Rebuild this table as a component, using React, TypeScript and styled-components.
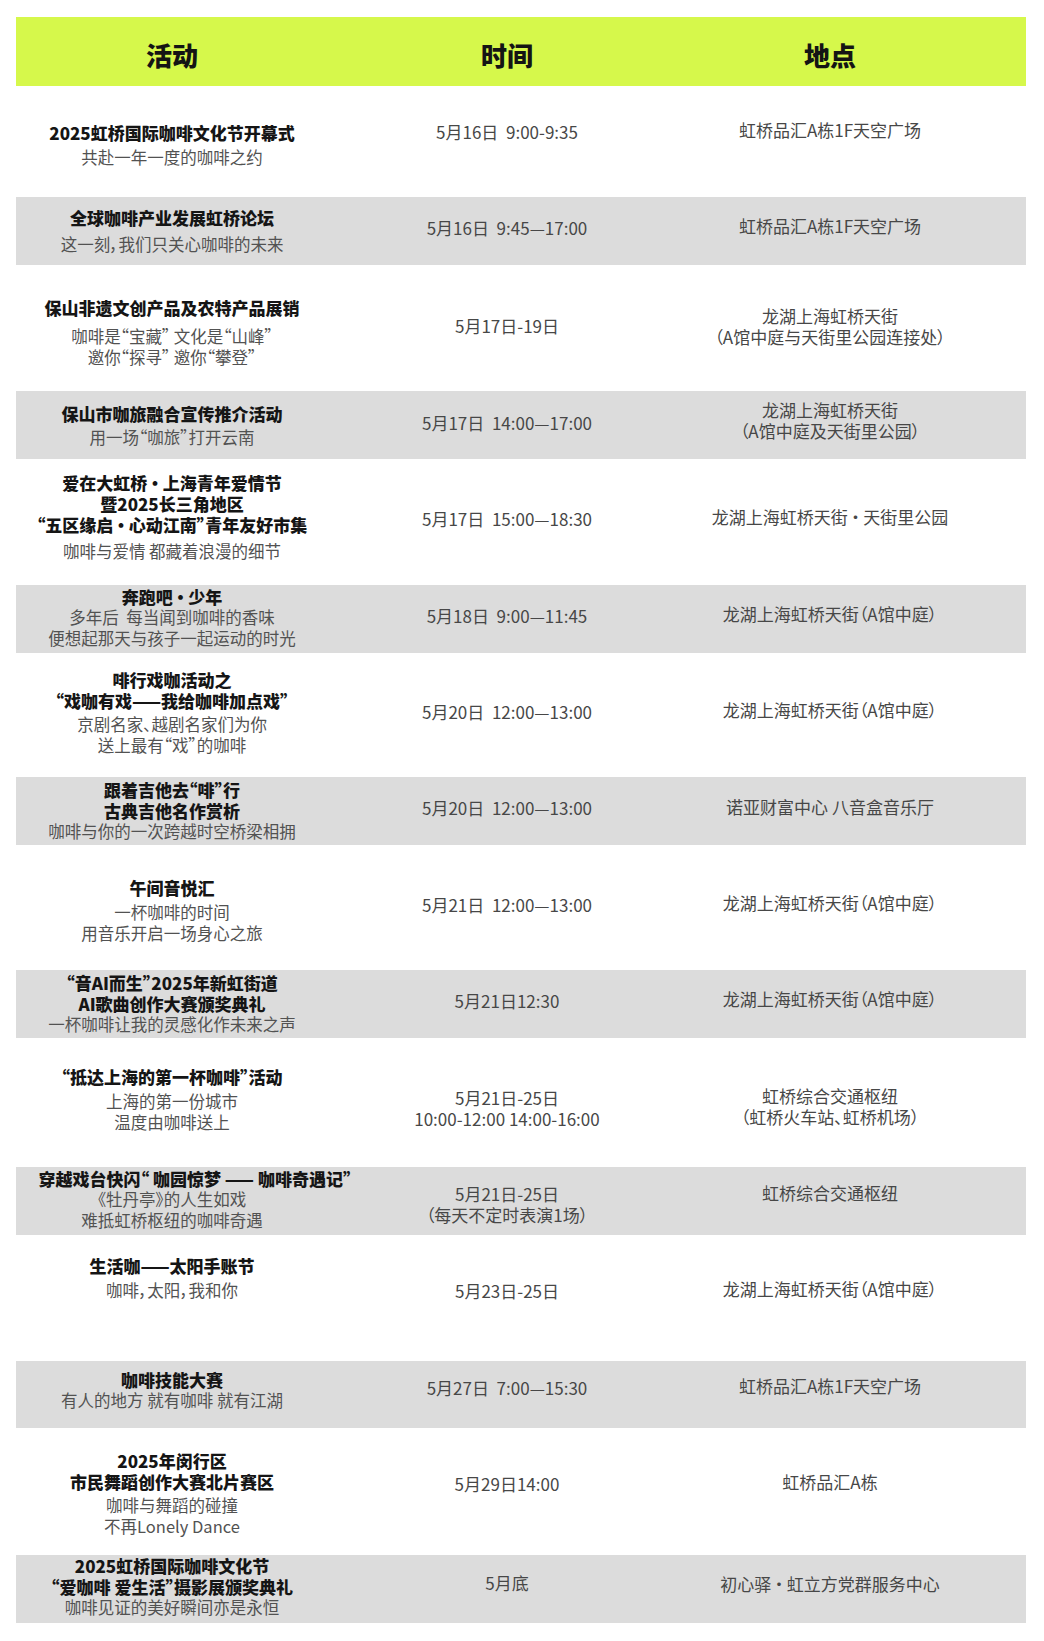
import React from "react";
import styled, { createGlobalStyle } from "styled-components";

const GlobalStyle = createGlobalStyle`
  html, body {
    margin: 0;
    padding: 0;
    background: #ffffff;
  }
  body {
    font-family: "Noto Sans CJK SC", "Noto Sans", sans-serif;
    font-feature-settings: "palt";
  }
`;

// activity / time / place / empty gutter on the right
const COLUMNS = "312px 358px 288px 1fr";

// middle dot with a little air on both sides, as in the poster
const DOT = "\u2009·\u2009";

const Page = styled.div`
  width: 1044px;
  box-sizing: border-box;
  padding: 17px 18px 18px 16px;
`;

const HeaderRow = styled.div`
  display: grid;
  grid-template-columns: ${COLUMNS};
  align-items: center;
  height: 69px;
  background: #d6f84b;
`;

const HeaderCell = styled.div`
  padding-top: 5px;
  text-align: center;
  font-size: 26px;
  font-weight: 900;
  color: #141414;
`;

const Row = styled.div<{ $height: number; $shaded: boolean }>`
  display: grid;
  grid-template-columns: ${COLUMNS};
  align-items: center;
  height: ${(p) => p.$height}px;
  background: ${(p) => (p.$shaded ? "#dcdcdc" : "#ffffff")};
`;

// moves a centred cell up (negative) or down (positive) by the given px
const shiftPad = (s: number) =>
  s >= 0 ? `padding-top: ${s * 2}px;` : `padding-bottom: ${-s * 2}px;`;

const ActivityCell = styled.div<{ $shift: number }>`
  display: flex;
  flex-direction: column;
  align-items: center;
  text-align: center;
  white-space: pre;
  ${(p) => shiftPad(p.$shift)}
`;

const Title = styled.div<{ $nudge: number }>`
  margin-left: ${(p) => p.$nudge}px;
  font-size: 17px;
  line-height: 21px;
  font-weight: 900;
  color: #151515;
`;

const Subtitles = styled.div<{ $gap: number }>`
  margin-top: ${(p) => p.$gap}px;
  font-size: 16.5px;
  line-height: 21px;
  color: #525252;
`;

const InfoCell = styled.div<{ $shift: number }>`
  text-align: center;
  font-size: 17px;
  line-height: 21px;
  color: #474747;
  white-space: pre;
  ${(p) => shiftPad(p.$shift)}
`;

type Event = {
  title: string[];
  sub: string[];
  time: string[];
  place: string[];
  height: number;
  gap: number;
  a: number;
  t: number;
  p: number;
  nudge?: number;
};

const events: Event[] = [
  {
    title: ["2025虹桥国际咖啡文化节开幕式"],
    sub: ["共赴一年一度的咖啡之约"],
    time: ["5月16日  9:00-9:35"],
    place: ["虹桥品汇A栋1F天空广场"],
    height: 111, gap: 4, a: 3, t: -10, p: -12,
  },
  {
    title: ["全球咖啡产业发展虹桥论坛"],
    sub: ["这一刻，我们只关心咖啡的未来"],
    time: ["5月16日  9:45—17:00"],
    place: ["虹桥品汇A栋1F天空广场"],
    height: 68, gap: 6, a: 0, t: -3.5, p: -5.5,
  },
  {
    title: ["保山非遗文创产品及农特产品展销"],
    sub: ["咖啡是“宝藏” 文化是“山峰”", "邀你“探寻” 邀你“攀登”"],
    time: ["5月17日-19日"],
    place: ["龙湖上海虹桥天街", "（A馆中庭与天街里公园连接处）"],
    height: 126, gap: 8, a: 4, t: -3, p: -2,
  },
  {
    title: ["保山市咖旅融合宣传推介活动"],
    sub: ["用一场“咖旅”打开云南"],
    time: ["5月17日  14:00—17:00"],
    place: ["龙湖上海虹桥天街", "（A馆中庭及天街里公园）"],
    height: 68, gap: 3, a: 0, t: -3, p: -5,
  },
  {
    title: [`爱在大虹桥${DOT}上海青年爱情节`, "暨2025长三角地区", `“五区缘启${DOT}心动江南”青年友好市集`],
    sub: ["咖啡与爱情 都藏着浪漫的细节"],
    time: ["5月17日  15:00—18:30"],
    place: [`龙湖上海虹桥天街${DOT}天街里公园`],
    height: 126, gap: 6, a: -5.5, t: -4, p: -6,
  },
  {
    title: [`奔跑吧${DOT}少年`],
    sub: ["多年后  每当闻到咖啡的香味", "便想起那天与孩子一起运动的时光"],
    time: ["5月18日  9:00—11:45"],
    place: ["龙湖上海虹桥天街（A馆中庭）"],
    height: 68, gap: 0, a: -2, t: -4, p: -6,
  },
  {
    title: ["啡行戏咖活动之", "“戏咖有戏——我给咖啡加点戏”"],
    sub: ["京剧名家、越剧名家们为你", "送上最有“戏”的咖啡"],
    time: ["5月20日  12:00—13:00"],
    place: ["龙湖上海虹桥天街（A馆中庭）"],
    height: 124, gap: 3, a: -3, t: -4, p: -6,
  },
  {
    title: ["跟着吉他去“啡”行", "古典吉他名作赏析"],
    sub: ["咖啡与你的一次跨越时空桥梁相拥"],
    time: ["5月20日  12:00—13:00"],
    place: ["诺亚财富中心 八音盒音乐厅"],
    height: 68, gap: 0, a: -1, t: -4, p: -5,
  },
  {
    title: ["午间音悦汇"],
    sub: ["一杯咖啡的时间", "用音乐开启一场身心之旅"],
    time: ["5月21日  12:00—13:00"],
    place: ["龙湖上海虹桥天街（A馆中庭）"],
    height: 125, gap: 4, a: 2.5, t: -3.5, p: -5.5,
  },
  {
    title: ["“音AI而生”2025年新虹街道", "AI歌曲创作大赛颁奖典礼"],
    sub: ["一杯咖啡让我的灵感化作未来之声"],
    time: ["5月21日12:30"],
    place: ["龙湖上海虹桥天街（A馆中庭）"],
    height: 68, gap: 0, a: -1, t: -4, p: -6,
  },
  {
    title: ["“抵达上海的第一杯咖啡”活动"],
    sub: ["上海的第一份城市", "温度由咖啡送上"],
    time: ["5月21日-25日", "10:00-12:00 14:00-16:00"],
    place: ["虹桥综合交通枢纽", "（虹桥火车站、虹桥机场）"],
    height: 129, gap: 4, a: -3.5, t: 5, p: 3,
  },
  {
    title: ["穿越戏台快闪“ 咖园惊梦 —— 咖啡奇遇记”"],
    sub: ["《牡丹亭》的人生如戏", "难抵虹桥枢纽的咖啡奇遇"],
    time: ["5月21日-25日", "（每天不定时表演1场）"],
    place: ["虹桥综合交通枢纽"],
    height: 68, gap: 0, a: -1.5, t: 2.5, p: -9, nudge: 46,
  },
  {
    title: ["生活咖——太阳手账节"],
    sub: ["咖啡，太阳，我和你"],
    time: ["5月23日-25日"],
    place: ["龙湖上海虹桥天街（A馆中庭）"],
    height: 126, gap: 4, a: -20.5, t: -8, p: -10,
  },
  {
    title: ["咖啡技能大赛"],
    sub: ["有人的地方 就有咖啡 就有江湖"],
    time: ["5月27日  7:00—15:30"],
    place: ["虹桥品汇A栋1F天空广场"],
    height: 67, gap: 0, a: -5, t: -7.5, p: -9.5,
  },
  {
    title: ["2025年闵行区", "市民舞蹈创作大赛北片赛区"],
    sub: ["咖啡与舞蹈的碰撞", "不再Lonely Dance"],
    time: ["5月29日14:00"],
    place: ["虹桥品汇A栋"],
    height: 127, gap: 3, a: 1.5, t: -8, p: -10,
  },
  {
    title: ["2025虹桥国际咖啡文化节", "“爱咖啡 爱生活”摄影展颁奖典礼"],
    sub: ["咖啡见证的美好瞬间亦是永恒"],
    time: ["5月底"],
    place: [`初心驿${DOT}虹立方党群服务中心`],
    height: 68, gap: 0, a: -3.5, t: -8, p: -7,
  },
];

export default function App() {
  return (
    <>
      <GlobalStyle />
      <Page>
        <HeaderRow>
          <HeaderCell>活动</HeaderCell>
          <HeaderCell>时间</HeaderCell>
          <HeaderCell>地点</HeaderCell>
        </HeaderRow>

        {events.map((ev, i) => (
          <Row key={i} $height={ev.height} $shaded={i % 2 === 1}>
            <ActivityCell $shift={ev.a}>
              {ev.title.map((line) => (
                <Title key={line} $nudge={ev.nudge ?? 0}>
                  {line}
                </Title>
              ))}
              <Subtitles $gap={ev.gap}>
                {ev.sub.map((line) => (
                  <div key={line}>{line}</div>
                ))}
              </Subtitles>
            </ActivityCell>
            <InfoCell $shift={ev.t}>{ev.time.join("\n")}</InfoCell>
            <InfoCell $shift={ev.p}>{ev.place.join("\n")}</InfoCell>
          </Row>
        ))}
      </Page>
    </>
  );
}
